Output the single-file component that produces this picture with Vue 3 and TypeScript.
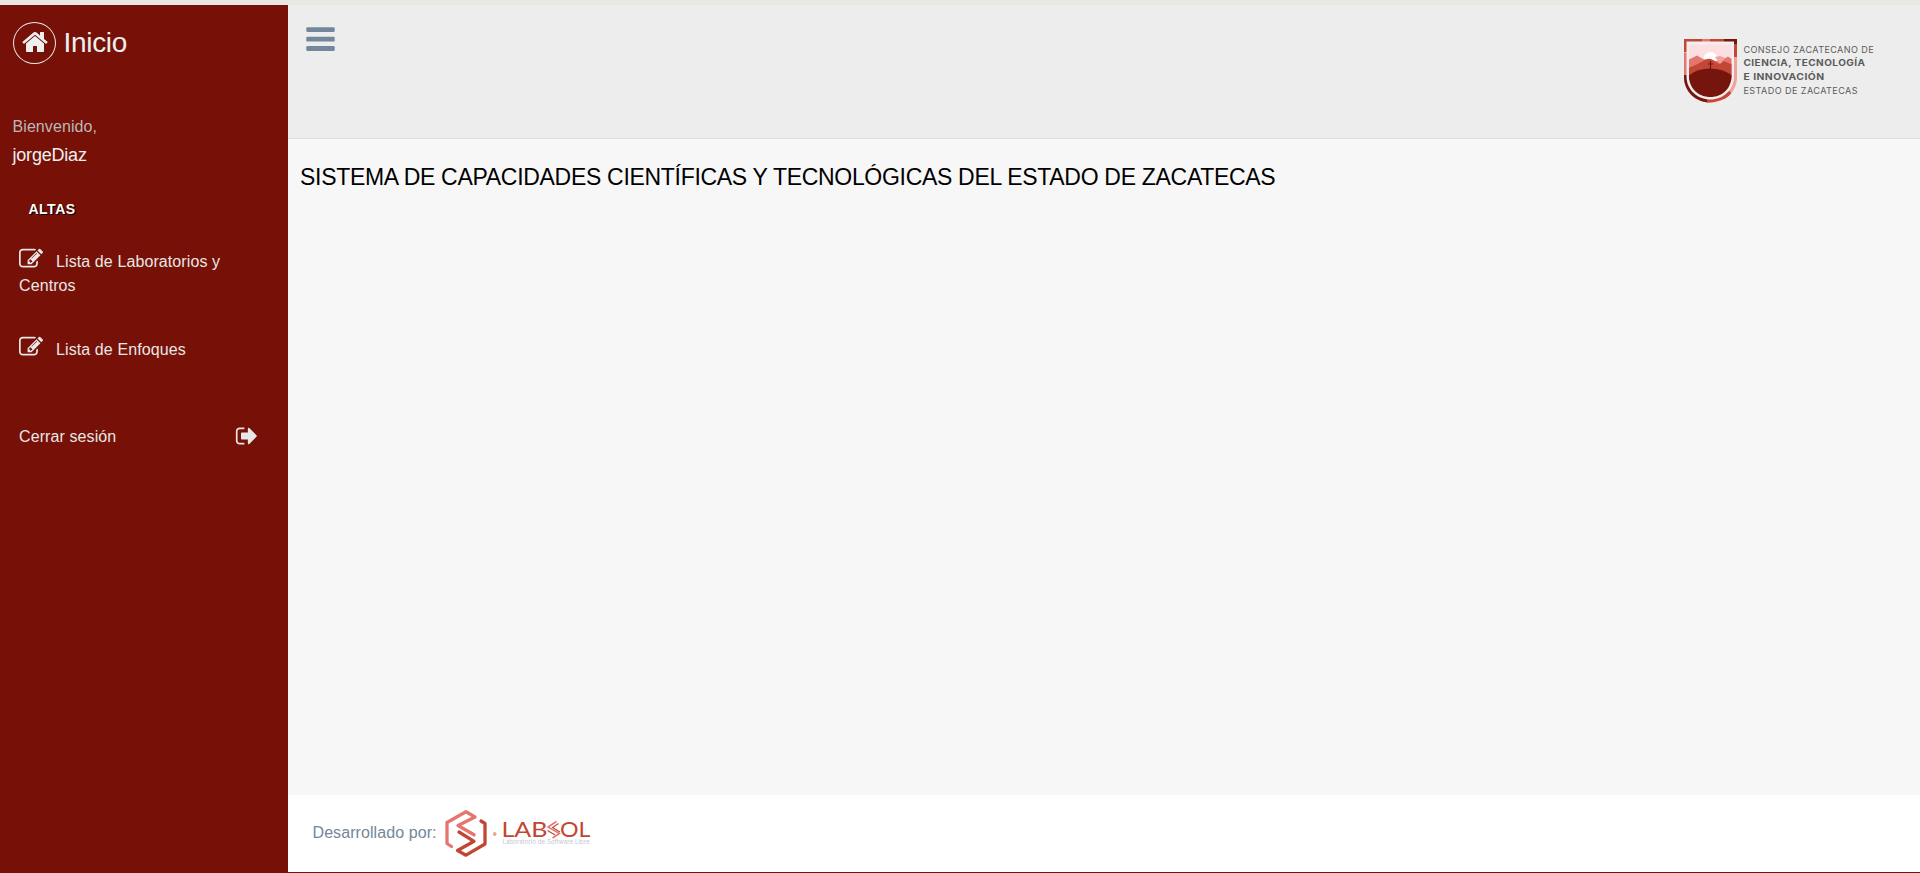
<script setup lang="ts">
interface MenuItem {
  id: number
  label: string
}

const userName = 'jorgeDiaz'

const menuItems: MenuItem[] = [
  { id: 1, label: 'Lista de Laboratorios y Centros' },
  { id: 2, label: 'Lista de Enfoques' },
]

const homePath =
  'M1472 992v480q0 26-19 45t-45 19h-384v-384h-256v384h-384q-26 0-45-19t-19-45v-480q0-1 .5-3t.5-3l575-474 575 474q1 2 1 6zm223-69l-62 74q-8 9-21 11h-3q-13 0-21-7l-692-577-692 577q-12 8-24 7-13-2-21-11l-62-74q-8-10-7-23.5t11-21.5l719-599q32-26 76-26t76 26l244 204v-195q0-14 9-23t23-9h192q14 0 23 9t9 23v408l219 182q10 8 11 21.5t-7 23.5z'
const editPath =
  'M888 1184l116-116-152-152-116 116v56h96v96h56zm440-720q-16-16-33 1l-350 350q-17 17-1 33t33-1l350-350q17-17 1-33zm80 594v190q0 119-84.5 203.5t-203.5 84.5h-832q-119 0-203.5-84.5t-84.5-203.5v-832q0-119 84.5-203.5t203.5-84.5h832q63 0 117 25 15 7 18 23 3 17-9 29l-49 49q-14 14-32 8-23-6-45-6h-832q-66 0-113 47t-47 113v832q0 66 47 113t113 47h832q66 0 113-47t47-113v-126q0-13 9-22l64-64q15-15 35-7t20 29zm-96-738l288 288-672 672h-288v-288zm444 132l-92 92-288-288 92-92q28-28 68-28t68 28l152 152q28 28 28 68t-28 68z'
const signOutPath =
  'M704 1440q0 4 1 20t.5 26.5-3 23.5-10 19.5-20.5 6.5h-320q-119 0-203.5-84.5t-84.5-203.5v-704q0-119 84.5-203.5t203.5-84.5h320q13 0 22.5 9.5t9.5 22.5q0 4 1 20t.5 26.5-3 23.5-10 19.5-20.5 6.5h-320q-66 0-113 47t-47 113v704q0 66 47 113t113 47h312l11.5 1 11.5 3 8 5.5 7 9 2 13.5zm928-544q0 26-19 45l-544 544q-19 19-45 19t-45-19-19-45v-288h-448q-26 0-45-19t-19-45v-384q0-26 19-45t45-19h448v-288q0-26 19-45t45-19 45 19l544 544q19 19 19 45z'
</script>

<template>
  <div class="page">
    <div class="layout">
      <aside class="sidebar">
        <a class="brand">
          <span class="brand-icon">
            <svg width="28" height="28" viewBox="0 0 1792 1792"><path :d="homePath" /></svg>
          </span>
          <span class="brand-text">Inicio</span>
        </a>
        <div class="profile">
          <div class="greeting">Bienvenido,</div>
          <div class="user">{{ userName }}</div>
        </div>
        <h3 class="section-title">Altas</h3>
        <nav class="menu">
          <a v-for="item in menuItems" :key="item.id" class="menu-item">
            <svg class="menu-icon" width="24" height="24" viewBox="0 0 1792 1792"><path :d="editPath" /></svg>{{ item.label }}
          </a>
        </nav>
        <a class="logout">
          <span>Cerrar sesión</span>
          <svg width="24" height="24" viewBox="0 0 1792 1792"><path :d="signOutPath" /></svg>
        </a>
      </aside>

      <div class="main">
        <header class="topbar">
          <button class="toggle" type="button" aria-label="Menú">
            <svg width="29" height="25" viewBox="0 0 29 25">
              <rect x="0.3" y="0.2" width="28.4" height="4.8" rx="1.2" />
              <rect x="0.3" y="9.8" width="28.4" height="4.8" rx="1.2" />
              <rect x="0.3" y="19.1" width="28.4" height="4.8" rx="1.2" />
            </svg>
          </button>
          <svg class="council" width="200" height="68" viewBox="1680 36 200 68">
            <defs>
              <clipPath id="outer"><path d="M1684 39H1737V77C1737 92 1725 102.5 1710.500 102.5S1684 92 1684 77Z" /></clipPath>
              <clipPath id="inner"><path d="M1689 44.500H1731.500V76C1731.500 88.500 1722 97 1710.300 97S1689 88.500 1689 76Z" /></clipPath>
            </defs>
            <g clip-path="url(#outer)">
              <rect x="1684" y="39" width="53" height="64" fill="#f0a19c" />
              <path d="M1684 39H1702V43H1687V52H1684Z" fill="#c34737" />
              <path d="M1702 39H1710V43H1702Z" fill="#e4756f" />
              <path d="M1710 39H1724V43H1710Z" fill="#c34737" />
              <path d="M1724 39H1737V44H1724Z" fill="#76140e" />
              <path d="M1733 44H1737V57H1733Z" fill="#c34737" />
              <path d="M1684 53H1688V75H1684Z" fill="#e4756f" />
              <path d="M1684 75H1688L1696 93L1708 98V104H1684Z" fill="#76140e" />
              <path d="M1707 98L1718 97L1728 90L1735 96L1707 104Z" fill="#c34737" />
            </g>
            <path d="M1686.500 41.500H1734V76.500C1734 90 1723 99.500 1710.300 99.500S1686.500 90 1686.500 76.500Z" fill="#f1eeee" />
            <g clip-path="url(#inner)">
              <rect x="1688" y="43" width="45" height="56" fill="#fbdfe1" />
              <circle cx="1710.500" cy="59" r="7" fill="#fff" />
              <path d="M1688 60L1697 55.500L1703 59L1708 60L1717 61L1722 60L1728 56.500L1733 60V75H1688Z" fill="#e4756f" />
              <path d="M1715 57L1720 64L1725 58L1720 56Z" fill="#f0a19c" />
              <path d="M1688 68Q1697 65 1705 60Q1709 57.500 1713 60L1717 63L1720 64L1724 61L1733 65V80H1688Z" fill="#c34737" />
              <path d="M1688 76Q1697 68.500 1710 68.500T1733 76V99H1688Z" fill="#76140e" />
              <path d="M1710.500 61V69M1708 64H1713" stroke="#76140e" stroke-width="1.200" />
            </g>
            <g class="council-text">
              <text x="1743.500" y="52.700" textLength="130.500" lengthAdjust="spacingAndGlyphs">CONSEJO ZACATECANO DE</text>
              <text x="1743.500" y="66.400" textLength="122" lengthAdjust="spacingAndGlyphs" class="strong">CIENCIA, TECNOLOGÍA</text>
              <text x="1743.500" y="80.100" textLength="81" lengthAdjust="spacingAndGlyphs" class="strong">E INNOVACIÓN</text>
              <text x="1743.500" y="94" textLength="114.500" lengthAdjust="spacingAndGlyphs">ESTADO DE ZACATECAS</text>
            </g>
          </svg>
        </header>

        <main class="content">
          <h1>SISTEMA DE CAPACIDADES CIENTÍFICAS Y TECNOLÓGICAS DEL ESTADO DE ZACATECAS</h1>
        </main>

        <footer class="footer">
          <span class="credit">Desarrollado por:</span>
          <svg class="labsol" width="150" height="50" viewBox="443 808 150 50">
            <g fill="none" stroke-width="3.300" stroke-linecap="round" stroke-linejoin="round">
              <path d="M451.500 846.500L447 843.500V822.500L466 811.800L475 817L458 825.500L474 834.800" stroke="#e4756f" />
              <path d="M481 821L485 823.500V844L466 855.200L457.500 850.500L474 841.300L459 832" stroke="#c24634" />
            </g>
            <circle cx="494.700" cy="834" r="1.900" fill="#f0a19c" />
            <g class="labsol-text">
              <text x="501.500" y="837" textLength="46" lengthAdjust="spacingAndGlyphs">LAB</text>
              <text x="560" y="837" textLength="30.500" lengthAdjust="spacingAndGlyphs">OL</text>
            </g>
            <path d="M556.500 821.500L548 827L559.500 833.500L552.500 838" fill="none" stroke="#e4756f" stroke-width="1.500" />
            <path d="M558.500 823.500L552.500 827.500L560 832M547.500 830.500L555 835" fill="none" stroke="#c24634" stroke-width="1.100" />
            <text class="labsol-sub" x="502.500" y="843.800" textLength="87" lengthAdjust="spacingAndGlyphs">Laboratorio de Software Libre</text>
          </svg>
        </footer>
      </div>
    </div>
  </div>
</template>

<style>
html,
body {
  margin: 0;
  overflow: hidden;
}
</style>

<style scoped>
.page {
  box-sizing: border-box;
  height: 873px;
  padding-top: 5px;
  background: #e9e7e1;
  font-family: "Liberation Sans", Arial, sans-serif;
  font-size: 16px;
  line-height: 24px;
}

.layout {
  box-sizing: border-box;
  display: flex;
  height: 868px;
  padding-bottom: 1px;
  background: #771006;
}

.sidebar {
  box-sizing: border-box;
  width: 288px;
  flex: none;
  color: #e7e7e7;
}

.sidebar svg {
  fill: currentColor;
}

.brand {
  display: flex;
  align-items: center;
  height: 42px;
  padding: 17px 0 0 13px;
  color: #ecf0f1;
}

.brand-icon {
  box-sizing: border-box;
  display: flex;
  align-items: center;
  justify-content: center;
  width: 43px;
  height: 42px;
  border: 1px solid #eaeaea;
  border-radius: 50%;
}

.brand-icon svg {
  margin: -3px 0 0 0;
}

.brand-text {
  margin-left: 7.500px;
  font-size: 28px;
  line-height: 42px;
  letter-spacing: -0.3px;
}

.profile {
  padding: 51px 0 0 12.500px;
}

.greeting {
  color: #bab8b8;
  letter-spacing: 0.08px;
}

.user {
  margin-top: 4px;
  color: #ecf0f1;
  font-size: 18px;
  letter-spacing: -0.2px;
}

.section-title {
  margin: 32px 0 0 28.500px;
  color: #fff;
  font-size: 14px;
  font-weight: bold;
  line-height: 20px;
  letter-spacing: 0.5px;
  text-transform: uppercase;
  text-shadow: 1px 1px #000;
}

.menu {
  padding: 31px 30px 0 19px;
}

.menu-item {
  display: block;
  margin-bottom: 40px;
  letter-spacing: 0.1px;
}

.menu-icon {
  margin: -8px 13.500px 0 -0.500px;
  vertical-align: -4px;
}

.logout {
  display: flex;
  align-items: center;
  justify-content: space-between;
  margin-top: 63px;
  padding: 0 29px 0 19px;
  letter-spacing: 0.1px;
}

.logout svg {
  margin-top: -2px;
}

.main {
  display: flex;
  flex: 1;
  flex-direction: column;
}

.topbar {
  box-sizing: border-box;
  display: flex;
  align-items: flex-start;
  justify-content: space-between;
  height: 134px;
  padding: 22px 40px 0 18px;
  border-bottom: 1px solid #d9dee4;
  background: #ededed;
}

.toggle {
  display: block;
  padding: 0;
  border: 0;
  background: none;
  line-height: 0;
}

.toggle svg {
  fill: #73879c;
}

.council {
  margin-top: 9px;
}

.council-text {
  fill: #5c5b59;
  font-family: Inter, "Open Sans", sans-serif;
  font-size: 8.800px;
  letter-spacing: 0.4px;
}

.council-text .strong {
  font-weight: 700;
}

.content {
  flex: 1;
  padding: 22px 12px;
  background: #f7f7f7;
}

h1 {
  margin: 0;
  color: #000;
  font-size: 23px;
  font-weight: 400;
  line-height: 32px;
  letter-spacing: -0.3px;
}

.footer {
  box-sizing: border-box;
  display: flex;
  align-items: center;
  height: 77px;
  padding-left: 24.500px;
  background: #fff;
  color: #73879c;
}

.credit {
  margin-top: -2px;
  letter-spacing: 0.08px;
}

.labsol {
  margin: -1px 0 0 6px;
}

.labsol-text {
  fill: #c24634;
  font-family: Lato, sans-serif;
  font-size: 21px;
}

.labsol-sub {
  fill: #c6c7d3;
  font-family: Inter, sans-serif;
  font-size: 5.500px;
}
</style>
